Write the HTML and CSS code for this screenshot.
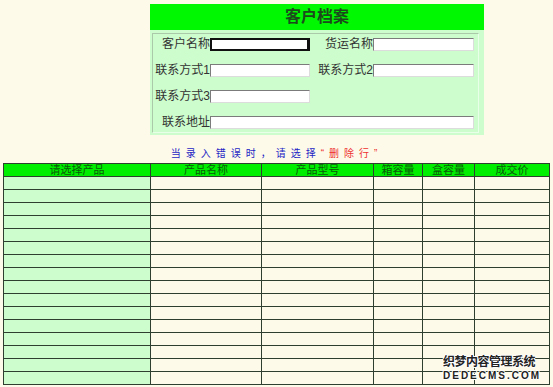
FILE: index.html
```html
<!DOCTYPE html>
<html lang="zh-CN">

<head>
    <meta charset="utf-8">
    <title>客户档案</title>

    <link rel="stylesheet" href="styles.css">
</head>

<body>
    <div class="panel">
        <h1 class="panel-title">客户档案</h1>
        <div class="panel-body">
            <form action="" class="customer-form">
                <label for="name">客户名称</label>
                <input type="text" id="name" class="focused">
                <label for="ship">货运名称</label>
                <input type="text" id="ship">

                <label for="tel1">联系方式1</label>
                <input type="text" id="tel1">
                <label for="tel2">联系方式2</label>
                <input type="text" id="tel2">

                <label for="tel3">联系方式3</label>
                <input type="text" id="tel3">
                <span></span>
                <span></span>

                <label for="addr">联系地址</label>
                <input type="text" id="addr" class="wide">
            </form>
        </div>
    </div>

    <p class="note">当录入错误时，请选择<span class="red">“删除行”</span></p>

    <table class="products">
        <colgroup>
            <col style="width: 147px">
            <col style="width: 111px">
            <col style="width: 112px">
            <col style="width: 49px">
            <col style="width: 52px">
            <col style="width: 75px">
        </colgroup>
        <thead>
            <tr>
                <th>请选择产品</th>
                <th>产品名称</th>
                <th>产品型号</th>
                <th>箱容量</th>
                <th>盒容量</th>
                <th>成交价</th>
            </tr>
        </thead>
        <tbody id="rows"></tbody>
    </table>

    <div class="watermark">
        <p class="wm-cn">织梦内容管理系统</p>
        <p class="wm-en">DEDECMS.COM</p>
    </div>

    <script>
        const tbody = document.getElementById("rows");

        for (let i = 0; i < 16; i++) {
            const tr = document.createElement("tr");
            tr.innerHTML = '<td class="pick"></td><td></td><td></td><td></td><td></td><td></td>';
            tbody.appendChild(tr);
        }
    </script>
</body>

</html>
```

FILE: styles.css
```css
* {
    padding: 0;
    margin: 0;
    box-sizing: border-box;
    font-family: "Liberation Sans", "Noto Sans CJK SC", sans-serif;
}

body {
    background-color: #fdfaea;
    position: relative;
    min-height: 387px;
}

.panel {
    width: 334px;
    margin: 4px 0 0 150px;
}

.panel-title {
    height: 26px;
    line-height: 26px;
    background-color: #00f800;
    color: #1d4a1d;
    font-size: 16px;
    font-weight: bold;
    text-align: center;
}

.panel-body {
    background-color: #cdfccd;
    padding: 3px 5px 2px 2px;
}

.customer-form {
    display: grid;
    grid-template-columns: 57px 100px 63px 101px;
    grid-auto-rows: 13px;
    row-gap: 13px;
    align-items: center;
    height: 100px;
    padding: 4px 0 0 0;
    border: 1px solid #a9c9a9;
    border-right-color: #e8ffe8;
    border-bottom-color: #e8ffe8;
}

.customer-form label {
    font-size: 12px;
    line-height: 13px;
    color: #333;
    text-align: right;
    white-space: nowrap;
}

.customer-form input {
    height: 13px;
    width: 100%;
    background: #fff;
    border: 1px solid;
    border-color: #7b7b7b #dcdcdc #dcdcdc #7b7b7b;
    font-size: 11px;
}

.customer-form input.focused {
    border: 2px solid #111;
    border-right-width: 3px;
}

.customer-form input.wide {
    grid-column: 2 / 5;
}

.note {
    margin-top: 13px;
    font-size: 10px;
    line-height: 12px;
    letter-spacing: 5px;
    color: #1e1ec4;
    text-align: center;
}

.red {
    color: #ee3030;
}

.products {
    margin: 3px 0 0 3px;
    width: 547px;
    table-layout: fixed;
    border-collapse: collapse;
}

.products th,
.products td {
    height: 13px;
    padding: 0;
    border: 1px solid #2f3f2f;
    font-size: 12px;
    line-height: 12px;
    font-weight: normal;
    vertical-align: middle;
}

.products th {
    background-color: #00ee00;
    color: #0a5a0a;
    text-align: center;
    font-size: 11px;
    line-height: 11px;
    padding-top: 1px;
    vertical-align: bottom;
}

.products td.pick {
    background-color: #cdfccd;
}

.watermark {
    position: absolute;
    left: 443px;
    top: 355px;
    text-shadow: 1px 0 #fff, -1px 0 #fff, 0 1px #fff, 0 -1px #fff;
}

.wm-cn {
    font-size: 12px;
    line-height: 15px;
    font-weight: bold;
    color: #222;
    letter-spacing: -0.5px;
}

.wm-en {
    font-size: 10px;
    line-height: 12px;
    font-weight: bold;
    color: #222;
    letter-spacing: 2px;
}
```
